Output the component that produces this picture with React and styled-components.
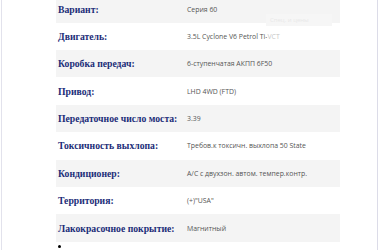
import React from "react";
import styled, { createGlobalStyle } from "styled-components";

const Global = createGlobalStyle`
  html, body { margin: 0; padding: 0; background: #fff; }
  body { width: 380px; height: 250px; overflow: hidden; }
`;

const Frame = styled.div`
  position: relative;
  box-sizing: border-box;
  width: 377px;
  height: 250px;
  margin-left: 1px;
  border-left: 1px solid #e2e2ec;
  border-right: 1px solid #dcdce8;
  overflow: hidden;
`;

const Table = styled.div`
  display: flex;
  flex-direction: column;
  width: 284px;
  margin: -4.7px 0 0 54px;
`;

const Row = styled.div`
  display: grid;
  grid-template-columns: 131px 1fr;
  align-items: center;
  height: 27.375px;
  background: ${(p) => (p.$shade ? "#f4f4f4" : "#fff")};
`;

const Label = styled.div`
  padding-left: 2px;
  font-family: "Liberation Serif", "Times New Roman", serif;
  font-weight: bold;
  font-size: 9.7px;
  color: #1b2d78;
  white-space: nowrap;
`;

const Value = styled.div`
  font-family: "Open Sans", "Noto Sans", sans-serif;
  font-size: 6.9px;
  color: #555;
  white-space: nowrap;
`;

const Bullets = styled.ul`
  margin: 0;
  padding: 0 0 0 56px;
  list-style: none;
`;

const Bullet = styled.li`
  width: 3px;
  height: 3px;
  margin-top: 3px;
  border-radius: 50%;
  background: #000;
`;

const WatermarkTab = styled.div`
  position: absolute;
  left: 264px;
  top: 14px;
  width: 66px;
  height: 12px;
  background: #f6f6f6;
  font-family: "Open Sans", sans-serif;
  font-size: 6px;
  line-height: 12px;
  color: #e8e8e8;
  padding-left: 4px;
  box-sizing: border-box;
`;

const WatermarkVeil = styled.div`
  position: absolute;
  left: 265px;
  top: 28px;
  width: 67px;
  height: 16px;
  background: rgba(255, 255, 255, 0.65);
`;

const rows = [
  ["Вариант:", "Серия 60"],
  ["Двигатель:", "3.5L Cyclone V6 Petrol Ti-VCT"],
  ["Коробка передач:", "6-ступенчатая АКПП 6F50"],
  ["Привод:", "LHD 4WD (FTD)"],
  ["Передаточное число моста:", "3.39"],
  ["Токсичность выхлопа:", "Требов.к токсичн. выхлопа 50 State"],
  ["Кондиционер:", "A/C с двухзон. автом. темпер.контр."],
  ["Территория:", "(+)\"USA\""],
  ["Лакокрасочное покрытие:", "Магнитный"],
];

export default function App() {
  return (
    <>
      <Global />
      <Frame>
        <Table>
          {rows.map(([l, v], i) => (
            <Row key={l} $shade={i % 2 === 0}>
              <Label>{l}</Label>
              <Value>{v}</Value>
            </Row>
          ))}
        </Table>
        <Bullets>
          <Bullet />
        </Bullets>
        <WatermarkTab>Спец. и цены</WatermarkTab>
        <WatermarkVeil />
      </Frame>
    </>
  );
}
